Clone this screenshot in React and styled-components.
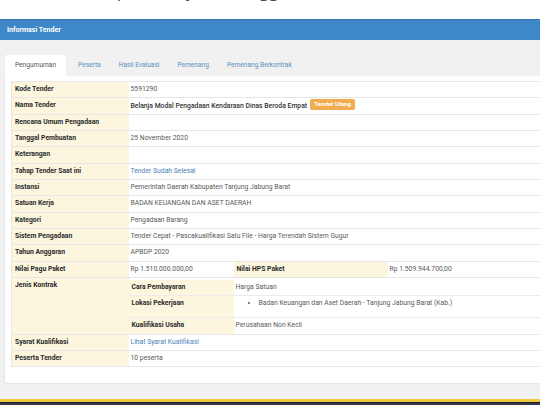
import React from "react";
import styled, { createGlobalStyle } from "styled-components";

const Global = createGlobalStyle`
  html, body { margin: 0; padding: 0; background: #ffffff; }
  body { font-family: Roboto, "Liberation Sans", Arial, sans-serif; overflow: hidden; }
  #root { width: 540px; height: 405px; overflow: hidden; }
`;

const Page = styled.div`
  width: 540px;
  height: 405px;
  display: flex;
  flex-direction: column;
  overflow: hidden;
`;

const TopStrip = styled.div`
  height: 19px;
  flex: none;
  overflow: hidden;
  background: #fff;
  padding-left: 117px;
`;

const TopText = styled.div`
  font-family: "Open Sans", sans-serif;
  font-size: 17px;
  line-height: 17px;
  margin-top: -18px;
  color: #4a4a4a;
  letter-spacing: 0.7px;
  white-space: nowrap;
`;

const PanelHead = styled.div`
  height: 21px;
  flex: none;
  background: #3e87c8;
  border-top: 1px solid #3577b3;
  box-sizing: border-box;
  color: #fff;
  font-size: 7px;
  font-weight: 700;
  line-height: 20px;
  padding-left: 7px;
`;

const PanelBody = styled.div`
  flex: none;
  background: #f1f1f1;
  padding: 15px 0 16px 5px;
`;

const Tabs = styled.div`
  display: flex;
  align-items: stretch;
  height: 21px;
`;

const Tab = styled.div`
  padding: 0 ${(p) => (p.$active ? "10px" : "9px")};
  font-size: 6.6px;
  line-height: 21px;
  color: ${(p) => (p.$active ? "#555" : "#5b8fc0")};
  background: ${(p) => (p.$active ? "#fff" : "transparent")};
  border-radius: 2px 2px 0 0;
  margin-right: ${(p) => (p.$active ? "3px" : "0")};
`;

const ContentBox = styled.div`
  background: #fff;
  overflow: hidden;
  padding: 5px 0 16px 6px;
  border-radius: 0 0 0 3px;
  box-shadow: -1px 1px 1px rgba(0, 0, 0, 0.05);
`;

const Table = styled.table`
  width: 620px;
  table-layout: fixed;
  border-collapse: collapse;
  border: 1px solid #e6e6e6;
  font-size: 6.8px;
`;

const Th = styled.th`
  background: #fcf6df;
  color: #2a2a2a;
  font-weight: 700;
  text-align: left;
  vertical-align: top;
  padding: 3px 3px;
  line-height: 9.3px;
  border-top: 1px solid #e6e6e6;
  white-space: nowrap;
`;

const Td = styled.td`
  color: #5a5a5a;
  vertical-align: top;
  padding: ${(p) => (p.$nest ? "2px 0 0 0" : "3px 2px")};
  line-height: 9.3px;
  border-top: 1px solid #e6e6e6;
  white-space: nowrap;
`;

const Link = styled.a`
  color: #4b82b8;
  text-decoration: none;
`;

const Badge = styled.span`
  display: inline-block;
  background: #f0ac4f;
  color: #fff;
  font-weight: 700;
  font-size: 6.2px;
  line-height: 7px;
  padding: 2px 4px;
  border-radius: 2px;
  margin-left: 3px;
  vertical-align: middle;
  margin-top: -2px;
`;

const NestTable = styled.table`
  width: 100%;
  table-layout: fixed;
  border-collapse: collapse;
  font-size: 6.8px;
`;

const NTh = styled.th`
  background: #fcf6df;
  color: #2a2a2a;
  font-weight: 700;
  text-align: left;
  vertical-align: top;
  padding: 3px 3px;
  line-height: 9.3px;
  border-bottom: ${(p) => (p.$last ? "0" : "1px solid #ececec")};
  white-space: nowrap;
`;

const NTd = styled.td`
  color: #5a5a5a;
  vertical-align: top;
  padding: 3px 2px;
  line-height: 9.3px;
  border-bottom: ${(p) => (p.$last ? "0" : "1px solid #ececec")};
  white-space: nowrap;
`;

const Bullets = styled.ul`
  margin: 0 0 6px;
  padding-left: 23px;
  list-style: disc;
`;

const Footer = styled.div`
  flex: 1;
  border-top: 3px solid #ecca3c;
  background: #3a3650;
  box-shadow: inset 0 1px 0 #1c1a22;
`;

const simpleRows = [
  ["Kode Tender", "5591290"],
  ["Nama Tender", "name"],
  ["Rencana Umum Pengadaan", ""],
  ["Tanggal Pembuatan", "25 November 2020"],
  ["Keterangan", ""],
  ["Tahap Tender Saat ini", "link:Tender Sudah Selesai"],
  ["Instansi", "Pemerintah Daerah Kabupaten Tanjung Jabung Barat"],
  ["Satuan Kerja", "BADAN KEUANGAN DAN ASET DAERAH"],
  ["Kategori", "Pengadaan Barang"],
  ["Sistem Pengadaan", "Tender Cepat - Pascakualifikasi Satu File - Harga Terendah Sistem Gugur"],
  ["Tahun Anggaran", "APBDP 2020"],
];

function renderValue(v) {
  if (v === "name") {
    return (
      <span style={{ color: "#333", fontWeight: 500 }}>
        Belanja Modal Pengadaan Kendaraan Dinas Beroda Empat
        <Badge>Tender Ulang</Badge>
      </span>
    );
  }
  if (v.startsWith("link:")) return <Link href="#">{v.slice(5)}</Link>;
  return v;
}

export default function App() {
  return (
    <Page>
      <Global />
      <TopStrip>
        <TopText>peserta jelas tanggal</TopText>
      </TopStrip>
      <PanelHead>Informasi Tender</PanelHead>
      <PanelBody>
        <Tabs>
          <Tab $active>Pengumuman</Tab>
          <Tab>Peserta</Tab>
          <Tab>Hasil Evaluasi</Tab>
          <Tab>Pemenang</Tab>
          <Tab>Pemenang Berkontrak</Tab>
        </Tabs>
        <ContentBox>
          <Table>
            <colgroup>
              <col style={{ width: 117 }} />
              <col style={{ width: 105 }} />
              <col style={{ width: 154 }} />
              <col />
            </colgroup>
            <tbody>
              {simpleRows.map(([k, v]) => (
                <tr key={k}>
                  <Th>{k}</Th>
                  <Td colSpan={3}>{renderValue(v)}</Td>
                </tr>
              ))}
              <tr>
                <Th>Nilai Pagu Paket</Th>
                <Td>Rp 1.510.000.000,00</Td>
                <Th>Nilai HPS Paket</Th>
                <Td>Rp 1.509.944.700,00</Td>
              </tr>
              <tr>
                <Th>Jenis Kontrak</Th>
                <Td colSpan={3} $nest>
                  <NestTable>
                    <colgroup>
                      <col style={{ width: 105 }} />
                      <col />
                    </colgroup>
                    <tbody>
                      <tr>
                        <NTh>Cara Pembayaran</NTh>
                        <NTd>Harga Satuan</NTd>
                      </tr>
                      <tr>
                        <NTh>Lokasi Pekerjaan</NTh>
                        <NTd>
                          <Bullets>
                            <li>Badan Keuangan dan Aset Daerah - Tanjung Jabung Barat (Kab.)</li>
                          </Bullets>
                        </NTd>
                      </tr>
                      <tr>
                        <NTh $last>Kualifikasi Usaha</NTh>
                        <NTd $last>Perusahaan Non Kecil</NTd>
                      </tr>
                    </tbody>
                  </NestTable>
                </Td>
              </tr>
              <tr>
                <Th>Syarat Kualifikasi</Th>
                <Td colSpan={3}>
                  <Link href="#">Lihat Syarat Kualifikasi</Link>
                </Td>
              </tr>
              <tr>
                <Th>Peserta Tender</Th>
                <Td colSpan={3}>10 peserta</Td>
              </tr>
            </tbody>
          </Table>
        </ContentBox>
      </PanelBody>
      <Footer />
    </Page>
  );
}
